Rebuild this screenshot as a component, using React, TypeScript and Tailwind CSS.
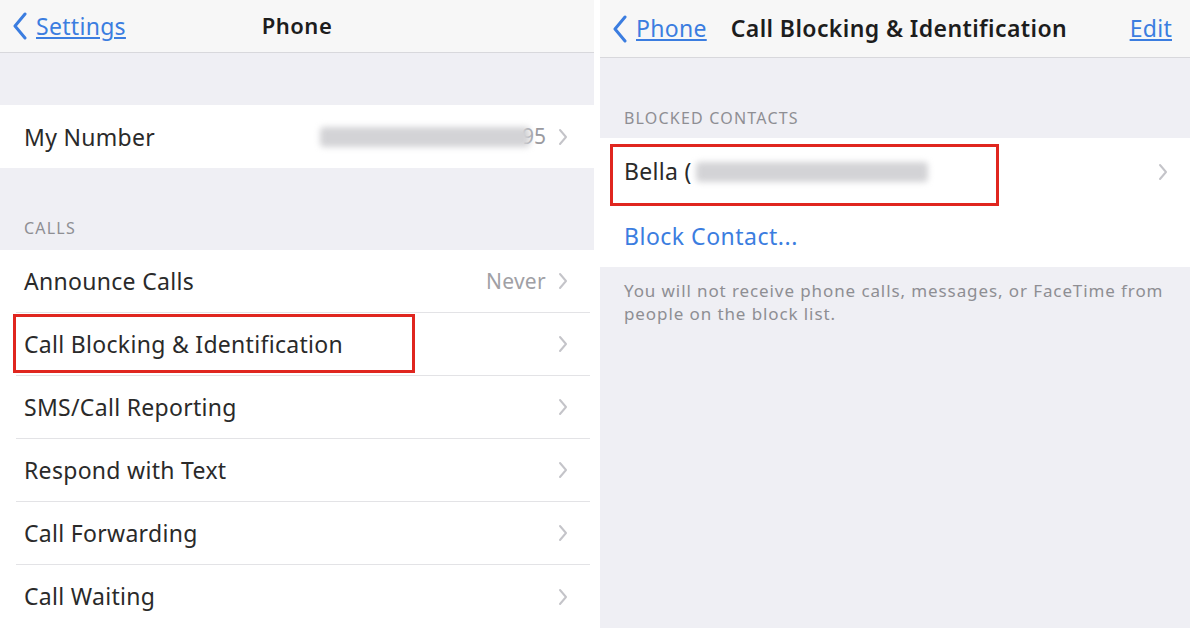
import React from "react";

const Chevron = () => (
  <svg width="10" height="18" viewBox="0 0 10 18" className="shrink-0">
    <path d="M2 2l6 7-6 7" fill="none" stroke="#c4c4c9" strokeWidth="2" strokeLinecap="round" strokeLinejoin="round" />
  </svg>
);

const BackChevron = () => (
  <svg width="16" height="28" viewBox="0 0 16 28" className="shrink-0">
    <path d="M13 2L3 14l10 12" fill="none" stroke="#3b7de0" strokeWidth="3" strokeLinecap="round" strokeLinejoin="round" />
  </svg>
);

const Row = ({ label, value, boxed, last }: { label: string; value?: React.ReactNode; boxed?: boolean; last?: boolean }) => (
  <div className="relative h-[63.5px] bg-white flex items-center pl-6 pr-[26px]">
    <span className="text-[23px] tracking-[0.3px] text-[#2a2a2a] flex-1">{label}</span>
    {value}
    <span className="ml-3"><Chevron /></span>
    {!last && <div className="absolute left-4 right-1 bottom-0 h-px bg-[#e3e3e6]" />}
    {boxed && <div className="absolute left-[13px] top-[1px] w-[402px] h-[59px] border-[3px] border-[#e0261f]" />}
  </div>
);

export default function App() {
  return (
    <div className="w-[1196px] h-[628px] bg-white flex overflow-hidden" style={{ fontFamily: '"Noto Sans", "Liberation Sans", Arial, sans-serif' }}>
      {/* Left panel */}
      <div className="w-[594px] h-full bg-[#efeff4] flex flex-col">
        <div className="h-[53px] bg-[#f7f7f7] border-b border-[#d8d8dc] relative flex items-center px-3">
          <BackChevron />
          <span className="ml-2 text-[23px] tracking-[0.3px] text-[#3b7de0] underline">Settings</span>
          <span className="absolute left-0 right-0 text-center text-[22px] tracking-[0.5px] font-semibold text-[#1d1d1d]">Phone</span>
        </div>
        <div className="h-[53px]" />
        <Row
          label="My Number"
          last
          value={
            <span className="flex items-center text-[21px] text-[#9a9a9f]">
              <span className="inline-block w-[210px] h-[20px] bg-[#d3d3d6] rounded-sm blur-[3px]" />
              <span className="-ml-[8px]">95</span>
            </span>
          }
        />
        <div className="h-[82px] flex items-end pl-6 pb-[10px]">
          <span className="text-[16px] tracking-[1.2px] text-[#8e8e93]">CALLS</span>
        </div>
        <Row label="Announce Calls" value={<span className="text-[21px] tracking-[0.3px] text-[#a0a0a5]">Never</span>} />
        <Row label="Call Blocking & Identification" boxed />
        <Row label="SMS/Call Reporting" />
        <Row label="Respond with Text" />
        <Row label="Call Forwarding" />
        <Row label="Call Waiting" last />
      </div>
      <div className="w-[6px]" />
      {/* Right panel */}
      <div className="w-[590px] h-full bg-[#efeff4] flex flex-col">
        <div className="h-[58px] bg-[#f7f7f7] border-b border-[#d8d8dc] flex items-center pl-3 pr-[18px]">
          <BackChevron />
          <span className="ml-2 text-[23px] tracking-[0.3px] text-[#3b7de0] underline">Phone</span>
          <span className="ml-[24px] text-[23px] tracking-[0.4px] font-semibold text-[#1d1d1d]">Call Blocking &amp; Identification</span>
          <span className="ml-auto text-[23px] tracking-[0.3px] text-[#3b7de0] underline">Edit</span>
        </div>
        <div className="h-[80px] flex items-end pl-6 pb-[8px]">
          <span className="text-[16px] tracking-[1.2px] text-[#8e8e93]">BLOCKED CONTACTS</span>
        </div>
        <div className="bg-white">
          <div className="relative h-[67px] flex items-center pl-6 pr-[22px]">
            <span className="text-[23px] tracking-[0.3px] text-[#2a2a2a]">Bella (</span>
            <span className="inline-block ml-1 w-[232px] h-[20px] bg-[#d3d3d6] rounded-sm blur-[3px]" />
            <span className="ml-auto"><Chevron /></span>
            <div className="absolute left-[10px] top-[6px] w-[389px] h-[62px] border-[3px] border-[#e0261f]" />
          </div>
          <div className="h-[62px] flex items-center pl-6">
            <span className="text-[23px] tracking-[0.5px] text-[#3b7de0]">Block Contact...</span>
          </div>
        </div>
        <div className="pl-6 pr-5 pt-[12px] text-[17px] tracking-[0.9px] leading-[23px] text-[#8e8e93]">
          You will not receive phone calls, messages, or FaceTime from people on the block list.
        </div>
      </div>
    </div>
  );
}
